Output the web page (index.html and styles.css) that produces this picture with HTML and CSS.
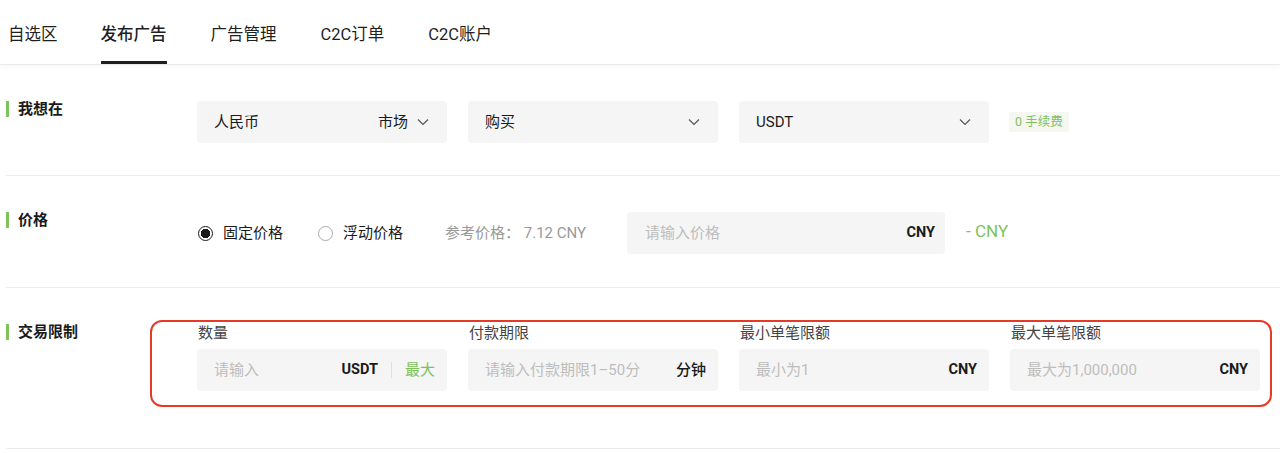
FILE: index.html
```html
<!DOCTYPE html>
<html lang="zh-CN">
<head>
  <meta charset="UTF-8">
  <meta name="viewport" content="width=device-width, initial-scale=1.0">
  <title>发布广告</title>
  <link rel="stylesheet" href="styles.css">
</head>
<body>
  <!-- Top tabs -->
  <div class="tabs">
    <div class="tab">自选区</div>
    <div class="tab active">发布广告</div>
    <div class="tab">广告管理</div>
    <div class="tab">C2C订单</div>
    <div class="tab">C2C账户</div>
  </div>

  <div class="form">
    <!-- 我想在 -->
    <div class="row row-want">
      <div class="label">我想在</div>
      <div class="content">
        <div class="select">
          <span>人民币</span>
          <span class="select-right">市场 <svg class="chev" viewBox="0 0 12 8"><path d="M1 1.5l5 5 5-5"/></svg></span>
        </div>
        <div class="select">
          <span>购买</span>
          <svg class="chev" viewBox="0 0 12 8"><path d="M1 1.5l5 5 5-5"/></svg>
        </div>
        <div class="select">
          <span>USDT</span>
          <svg class="chev" viewBox="0 0 12 8"><path d="M1 1.5l5 5 5-5"/></svg>
        </div>
        <div class="fee-tag">0 手续费</div>
      </div>
    </div>

    <!-- 价格 -->
    <div class="row row-price">
      <div class="label">价格</div>
      <div class="content">
        <label class="radio checked"><span class="dot"></span>固定价格</label>
        <label class="radio"><span class="dot"></span>浮动价格</label>
        <div class="ref-price">参考价格：&nbsp;7.12 CNY</div>
        <div class="input price-input">
          <span class="placeholder">请输入价格</span>
          <span class="unit">CNY</span>
        </div>
        <div class="price-result">- CNY</div>
      </div>
    </div>

    <!-- 交易限制 -->
    <div class="row row-limit">
      <div class="label">交易限制</div>
      <div class="content">
        <div class="field">
          <div class="field-label">数量</div>
          <div class="input">
            <span class="placeholder">请输入</span>
            <span class="suffix">
              <span class="unit">USDT</span>
              <span class="sep"></span>
              <span class="max">最大</span>
            </span>
          </div>
        </div>
        <div class="field">
          <div class="field-label">付款期限</div>
          <div class="input">
            <span class="placeholder">请输入付款期限1–50分</span>
            <span class="unit plain">分钟</span>
          </div>
        </div>
        <div class="field">
          <div class="field-label">最小单笔限额</div>
          <div class="input">
            <span class="placeholder">最小为1</span>
            <span class="unit">CNY</span>
          </div>
        </div>
        <div class="field">
          <div class="field-label">最大单笔限额</div>
          <div class="input">
            <span class="placeholder">最大为1,000,000</span>
            <span class="unit">CNY</span>
          </div>
        </div>
      </div>
      <!-- highlight box drawn over the limits -->
      <div class="highlight"></div>
    </div>
  </div>
</body>
</html>
```

FILE: styles.css
```css
body {
  margin: 0;
  font-family: Roboto, "Noto Sans CJK SC", sans-serif;
  line-height: 20px;
  color: #1a1a1a;
  background-color: #ffffff;
}

/* Tabs */
.tabs {
  display: flex;
  gap: 44px;
  height: 64px;
  padding-left: 8px;
  border-bottom: 1px solid #ececec;
  box-shadow: 0 2px 4px rgba(0, 0, 0, 0.04);
}

.tab {
  box-sizing: border-box;
  height: 64px;
  padding-top: 24px;
  font-size: 16.5px;
  line-height: 22px;
  color: #1f1f1f;
  border-bottom: 3px solid transparent;
}

.tab:first-child {
  margin-right: -1px;
}

.tab.active {
  font-weight: 500;
  border-bottom-color: #1f1f1f;
}

/* Form rows */
.form {
  padding-left: 6px;
}

.row {
  position: relative;
  display: flex;
  border-bottom: 1px solid #ececec;
}

.row-want {
  padding: 36px 0 32px;
}

.row-price {
  padding: 36px 0 33px;
}

.row-limit {
  padding: 35px 0 57px;
}

.label {
  box-sizing: border-box;
  flex: 0 0 191px;
  align-self: flex-start;
  height: 16px;
  padding-left: 9px;
  border-left: 3px solid #7cc35a;
  font-size: 15px;
  line-height: 16px;
  font-weight: 700;
  color: #1a1a1a;
}

.row-limit .label {
  margin-top: 1px;
}

.content {
  display: flex;
  align-items: center;
  gap: 21px;
}

/* Select boxes */
.select {
  box-sizing: border-box;
  width: 250px;
  height: 42px;
  padding: 0 18px 0 17px;
  display: flex;
  align-items: center;
  justify-content: space-between;
  background-color: #f5f5f5;
  border-radius: 4px;
  font-size: 15px;
}

.select-right {
  display: flex;
  align-items: center;
  gap: 9px;
}

.chev {
  width: 12px;
  height: 8px;
  fill: none;
  stroke: #555;
  stroke-width: 1.2;
}

.fee-tag {
  padding: 0 6px;
  height: 20px;
  line-height: 20px;
  font-size: 12.5px;
  color: #84c060;
  background-color: #f4f8f1;
  border-radius: 2px;
  margin-left: -1px;
}

/* Price row */
.row-price .content {
  gap: 0;
}

.radio {
  display: flex;
  align-items: center;
  gap: 10px;
  font-size: 15px;
  margin-right: 36px;
}

.radio .dot {
  box-sizing: border-box;
  width: 15px;
  height: 15px;
  border: 1px solid #aaa;
  border-radius: 50%;
  margin-left: 1px;
}

.radio.checked .dot {
  border-color: #1a1a1a;
  background: radial-gradient(circle, #1a1a1a 0 4.5px, #fff 5px);
}

.radio:first-child {
  margin-right: 34px;
}

.ref-price {
  font-size: 15px;
  color: #999;
  margin-left: 6px;
  margin-right: 41px;
}

.input {
  box-sizing: border-box;
  width: 250px;
  height: 42px;
  padding: 0 12px 0 17px;
  display: flex;
  align-items: center;
  justify-content: space-between;
  background-color: #f5f5f5;
  border-radius: 4px;
  font-size: 15px;
}

.price-input {
  width: 318px;
  padding-left: 18px;
  padding-right: 10px;
}

.placeholder {
  color: #bdbdbd;
  white-space: nowrap;
}

.unit {
  font-size: 14.5px;
  font-weight: 700;
  color: #1a1a1a;
}

.unit.plain {
  font-size: 15px;
  font-weight: 500;
}

.price-result {
  margin-left: 21px;
  margin-top: -4px;
  font-size: 17px;
  color: #7cc35a;
}

/* Limits row */
.row-limit .content {
  align-items: flex-start;
}

.field-label {
  font-size: 15px;
  line-height: 20px;
  color: #444;
  margin-bottom: 6px;
  padding-left: 1px;
}

.suffix {
  display: flex;
  align-items: center;
}

.sep {
  width: 1px;
  height: 16px;
  background-color: #e0e0e0;
  margin: 0 13px;
}

.max {
  color: #7cc35a;
}

.highlight {
  position: absolute;
  left: 144px;
  top: 32px;
  width: 1122px;
  height: 87px;
  box-sizing: border-box;
  border: 2px solid #e63a26;
  border-radius: 12px;
  pointer-events: none;
}
```
